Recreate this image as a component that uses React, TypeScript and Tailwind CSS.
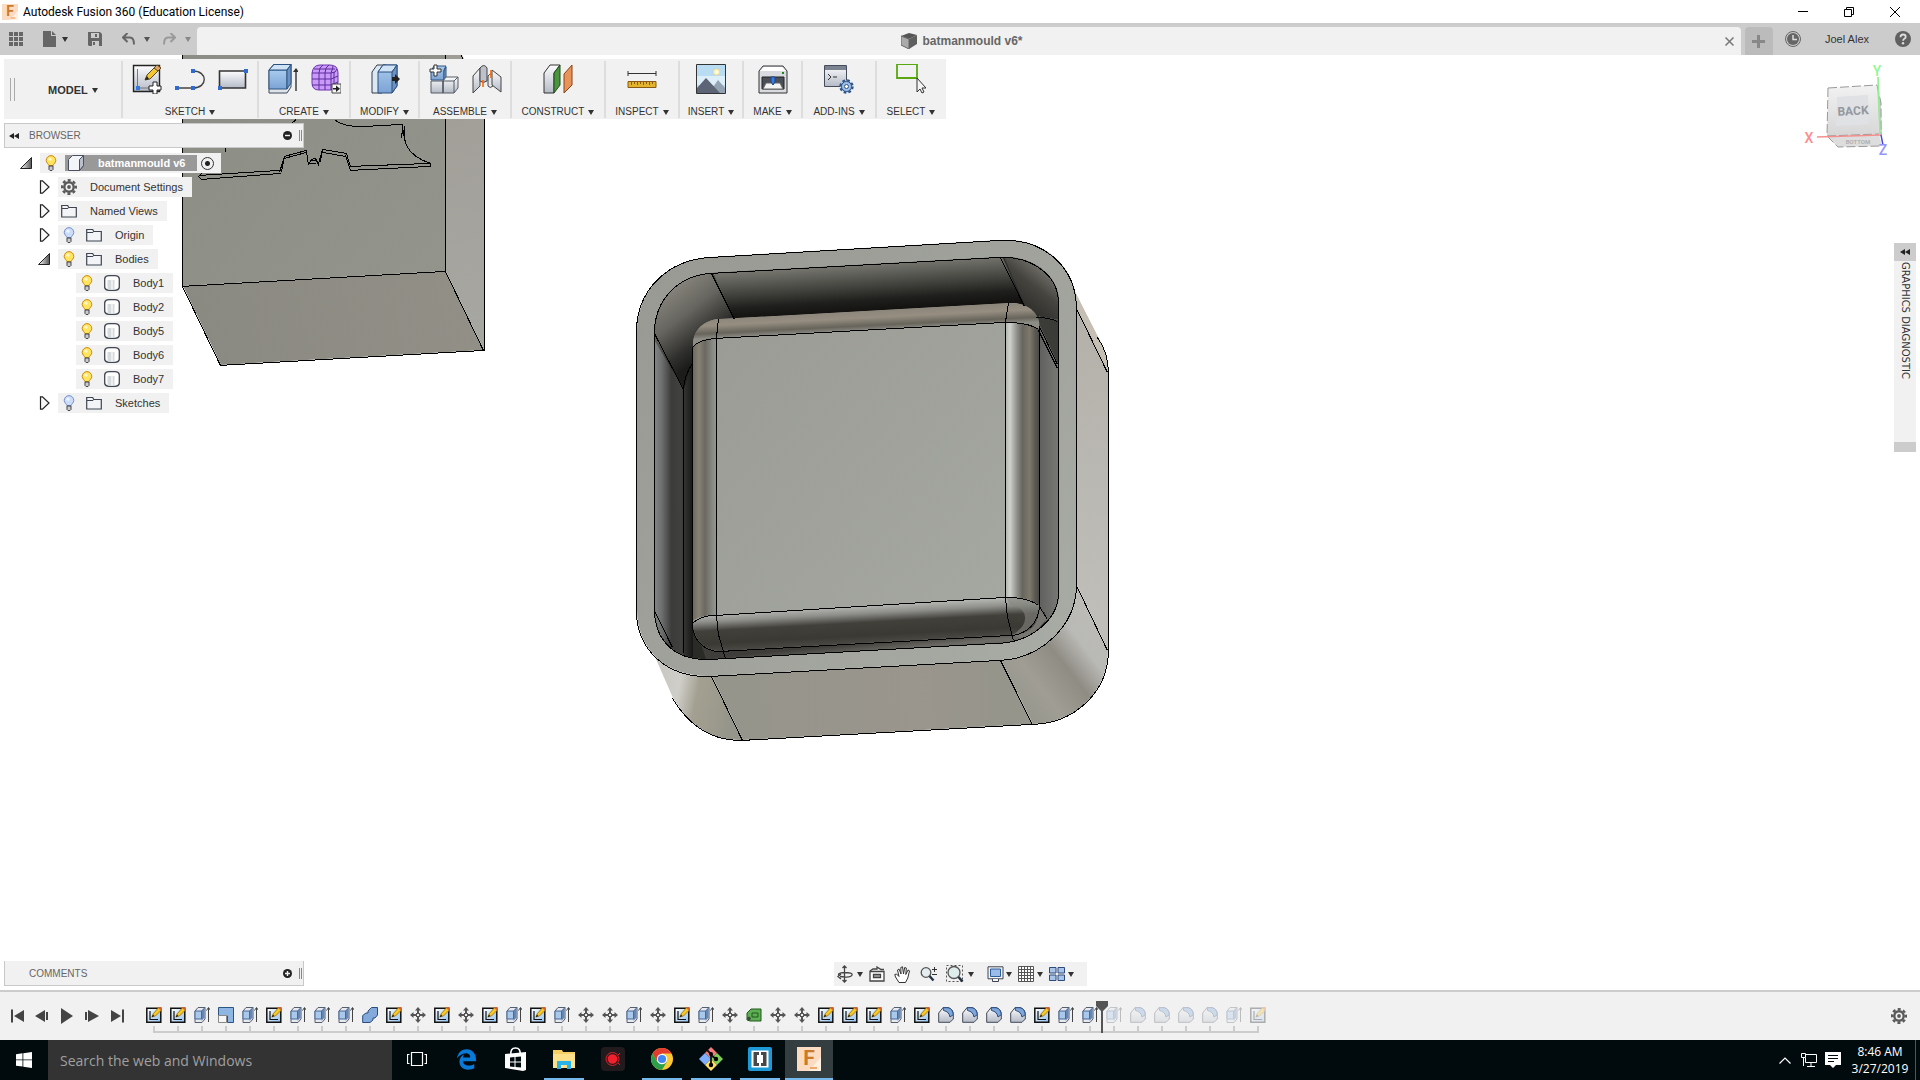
import type { ReactNode } from 'react'
import { FaEdgeLegacy } from 'react-icons/fa6'
import clsx from 'clsx'

const tools = [
  { label: 'SKETCH', width: 'w-[136px]', icons: [<SketchIcon />, <ArcIcon />, <RectIcon />] },
  { label: 'CREATE', width: 'w-[92px]', icons: [<ExtrudeIcon />, <FormIcon />] },
  { label: 'MODIFY', width: 'w-[69px]', icons: [<PressPullIcon />] },
  { label: 'ASSEMBLE', width: 'w-[92px]', icons: [<ComponentIcon />, <JointIcon />] },
  { label: 'CONSTRUCT', width: 'w-[94px]', icons: [<PlaneIcon />] },
  { label: 'INSPECT', width: 'w-[74px]', icons: [<MeasureIcon />] },
  { label: 'INSERT', width: 'w-[64px]', icons: [<DecalIcon />] },
  { label: 'MAKE', width: 'w-[59px]', icons: [<PrintIcon />] },
  { label: 'ADD-INS', width: 'w-[74px]', icons: [<ScriptIcon />] },
  { label: 'SELECT', width: 'w-[70px]', icons: [<SelectIcon />] },
]

type Feature = 'sketch' | 'extrude' | 'scale' | 'combine' | 'move' | 'canvas' | 'fillet'

const timeline: Feature[] = [
  'sketch', 'sketch', 'extrude', 'scale', 'extrude', 'sketch', 'extrude', 'extrude', 'extrude', 'combine',
  'sketch', 'move', 'sketch', 'move', 'sketch', 'extrude', 'sketch', 'extrude', 'move', 'move',
  'extrude', 'move', 'sketch', 'extrude', 'move', 'canvas', 'move', 'move', 'sketch', 'sketch',
  'sketch', 'extrude', 'sketch', 'fillet', 'fillet', 'fillet', 'fillet', 'sketch', 'extrude', 'extrude',
  'extrude', 'fillet', 'fillet', 'fillet', 'fillet', 'extrude', 'sketch',
]
const markerAt = 40

export default function App() {
  return (
    <div className="flex min-h-screen flex-col bg-white font-['Liberation_Sans',sans-serif] text-[11px] text-[#333]">
      <Gradients />
      <TitleBar />
      <TabBar />
      <main className="relative flex flex-1 flex-col">
        <Canvas />
        <div className="relative flex flex-1 items-start justify-between px-1 pt-1">
          <div>
            <Toolbar />
            <Browser />
          </div>
          <div className="flex flex-col items-end">
            <ViewCube />
            <Diagnostic />
          </div>
        </div>
        <div className="relative grid grid-cols-[1fr_auto_1fr] items-end px-1 pb-1">
          <section className="flex h-[25px] w-[300px] items-center border-x border-b border-[#c8c8c8] bg-[#f1f1f1] pl-6 text-[10px] text-[#666]">
            COMMENTS
            <button type="button" aria-label="Add comment" className="mr-[7px] ml-auto">
              <svg width="9" height="9" viewBox="0 0 9 9" className="block">
                <circle cx="4.5" cy="4.5" r="4.5" fill="#222" />
                <path d="M2 4.500h5M4.500 2v5" stroke="#f1f1f1" strokeWidth="1.400" />
              </svg>
            </button>
            <Grip />
          </section>
          <NavBar />
        </div>
      </main>
      <Timeline />
      <Taskbar />
    </div>
  )
}

function Caret({ className = 'text-[#333]' }: { className?: string }) {
  return (
    <svg width="6" height="5" viewBox="0 0 6 5" className={clsx('shrink-0', className)} aria-hidden>
      <path d="M0 0h6L3 5z" fill="currentColor" />
    </svg>
  )
}

function Grip() {
  return (
    <span className="mr-px flex h-[11px] w-[3px] justify-between" aria-hidden>
      <span className="w-px bg-[#888]" />
      <span className="w-px bg-[#888]" />
    </span>
  )
}

function TitleBar() {
  return (
    <header className="flex h-[23px] items-center pl-[2px] text-black">
      <FusionLogo size={16} />
      <h1 className="ml-[5px] font-['Roboto',sans-serif] text-[12px] leading-4">
        Autodesk Fusion 360 (Education License)
      </h1>
      <div className="mr-5 ml-auto flex items-center gap-9">
        <button type="button" aria-label="Minimize">
          <svg width="10" height="10" viewBox="0 0 10 10"><path d="M0 4.500h10" stroke="#000" /></svg>
        </button>
        <button type="button" aria-label="Restore">
          <svg width="10" height="10" viewBox="0 0 10 10" fill="none" stroke="#000">
            <path d="M.5 2.500h7v7h-7zM2.500 2.500v-2h7v7h-2" />
          </svg>
        </button>
        <button type="button" aria-label="Close">
          <svg width="10" height="10" viewBox="0 0 10 10"><path d="M0 0l10 10M10 0L0 10" stroke="#000" /></svg>
        </button>
      </div>
    </header>
  )
}

function TabBar() {
  return (
    <div className="flex h-8 bg-[#ccc]">
      <div className="flex w-[197px] items-center pl-[9px] text-[#666]">
        <button type="button" aria-label="Data panel">
          <svg width="14" height="14" viewBox="0 0 14 14" fill="currentColor">
            <path d="M0 0h4v4H0zM5 0h4v4H5zM10 0h4v4h-4zM0 5h4v4H0zM5 5h4v4H5zM10 5h4v4h-4zM0 10h4v4H0zM5 10h4v4H5zM10 10h4v4h-4z" />
          </svg>
        </button>
        <button type="button" aria-label="File" className="ml-5 flex items-center gap-[6px]">
          <svg width="13" height="16" viewBox="0 0 13 16" fill="currentColor">
            <path d="M0 0h8v5h5v11H0zM9 0l4 4H9z" />
          </svg>
          <Caret />
        </button>
        <button type="button" aria-label="Save" className="ml-5">
          <svg width="14" height="14" viewBox="0 0 14 14">
            <path d="M0 0h12l2 2v12H1l-1-1z" fill="#666" />
            <path d="M3 1h8v5H3zM4 9h7v5H4z" fill="#ccc" />
            <path d="M7 2h2v3H7zM5 10h2v3H5z" fill="#666" />
          </svg>
        </button>
        <button type="button" aria-label="Undo" className="ml-5 flex items-center gap-[9px]">
          <svg width="13" height="12" viewBox="0 0 13 12" fill="none" stroke="currentColor" strokeWidth="2">
            <path d="M5.500 0L1 4.500 5.500 9M1.500 4.500H8q4 0 4 7" />
          </svg>
          <Caret className="text-[#555]" />
        </button>
        <button type="button" aria-label="Redo" className="ml-[13px] flex items-center gap-[9px] text-[#999]">
          <svg width="13" height="12" viewBox="0 0 13 12" fill="none" stroke="currentColor" strokeWidth="2">
            <path d="M7.500 0L12 4.500 7.500 9M11.500 4.500H5q-4 0-4 7" />
          </svg>
          <Caret className="text-[#888]" />
        </button>
      </div>
      <div className="mt-1 flex flex-1 items-center rounded-t bg-[#f1f1f1]">
        <div className="flex flex-1 items-center justify-center gap-[5px] pl-[2px] text-[12px] font-bold text-[#666]">
          <svg width="16" height="16" viewBox="0 0 16 16">
            <path d="M0 3l8-3 8 2-8 4z" fill="#555" />
            <path d="M0 3l8 3v10l-8-4z" fill="#aaa" stroke="#666" />
            <path d="M8 6l8-4v9l-8 5z" fill="#5f5f5f" />
          </svg>
          batmanmould v6*
        </div>
        <button type="button" aria-label="Close tab" className="mr-[7px]">
          <svg width="9" height="9" viewBox="0 0 9 9"><path d="M.5.5l8 8M8.500.5l-8 8" stroke="#777" strokeWidth="1.500" /></svg>
        </button>
      </div>
      <button type="button" aria-label="New tab" className="mt-1 ml-1 flex w-7 items-center justify-center rounded-t bg-[#bbb]">
        <svg width="13" height="13" viewBox="0 0 13 13"><path d="M0 6.500h13M6.500 0v13" stroke="#888" strokeWidth="3" /></svg>
      </button>
      <div className="flex items-center pr-[9px] pl-3">
        <button type="button" aria-label="Job status">
          <svg width="16" height="16" viewBox="0 0 16 16">
            <circle cx="8" cy="8" r="7.500" fill="none" stroke="#666" />
            <circle cx="8" cy="8" r="6" fill="#666" />
            <path d="M8 4v4.500h4" fill="none" stroke="#ddd" strokeWidth="1.500" />
          </svg>
        </button>
        <button type="button" className="mr-[26px] ml-6 leading-4">Joel Alex</button>
        <button type="button" aria-label="Help">
          <svg width="16" height="16" viewBox="0 0 16 16">
            <circle cx="8" cy="8" r="8" fill="#606060" />
            <path d="M5.500 6.200q0-2.700 2.600-2.700t2.600 2.200q0 1.300-1.400 2.100-1.200.7-1.200 2" fill="none" stroke="#ddd" strokeWidth="1.800" />
            <circle cx="8" cy="12.200" r="1.200" fill="#ddd" />
          </svg>
        </button>
      </div>
    </div>
  )
}

function Toolbar() {
  return (
    <nav className="flex h-[60px] w-max bg-[#f1f1f1] pt-[2px] pr-px pb-px text-[10px] text-[#333]">
      <div className="flex w-[117px] items-center">
        <span className="ml-[6px] flex h-[23px] w-[5px] justify-between" aria-hidden>
          <span className="w-px bg-[#aaa]" />
          <span className="w-px bg-[#aaa]" />
        </span>
        <button type="button" className="mt-px ml-[33px] flex items-center gap-1 text-[11px] font-bold">
          MODEL <Caret />
        </button>
      </div>
      {tools.map((tool) => (
        <div
          key={tool.label}
          className={clsx('flex flex-col items-center justify-between border-l-2 border-[#ddd] pt-[3px]', tool.width)}
        >
          <div className="flex gap-[13px]">
            {tool.icons.map((icon, i) => (
              <button key={i} type="button" aria-label={tool.label + ' command'}>{icon}</button>
            ))}
          </div>
          <button type="button" className="flex items-center gap-1 leading-3">
            {tool.label} <Caret />
          </button>
        </div>
      ))}
    </nav>
  )
}

function Icon({ children }: { children: ReactNode }) {
  return (
    <svg width="30" height="30" viewBox="0 0 30 30" fill="none" className="block" aria-hidden>
      {children}
    </svg>
  )
}

function SketchIcon() {
  return (
    <Icon>
      <path d="M1.500 1.500h26v26h-26z" fill="url(#steel)" stroke="#222" strokeWidth="1.400" />
      <path d="M5.500 5v19H17" stroke="#777" />
      <path d="M4 22h4v4H4z" fill="#2f7be0" />
      <path d="M13 16l2-5L24 2l4 3-10 10z" fill="#f4c733" stroke="#5a4a20" />
      <path d="M22 4l3-3 4 3-3 3z" fill="#e3a56c" stroke="#5a4a20" />
      <path d="M13 16l2-4 2 3z" fill="#222" />
      <path d="M21 18h4v4h4v4h-4v4h-4v-4h-4v-4h4z" fill="#fff" stroke="#222" />
    </Icon>
  )
}

function ArcIcon() {
  return (
    <Icon>
      <path d="M2 24h16c15 0 15-17 0-17" stroke="#444" strokeWidth="1.400" />
      <path d="M0 22h4v4H0zM16 22h4v4h-4zM16 5h4v4h-4z" fill="#2f6bd0" />
    </Icon>
  )
}

function RectIcon() {
  return (
    <Icon>
      <path d="M1.500 7h26v17h-26z" fill="url(#steel)" stroke="#333" strokeWidth="1.600" />
      <path d="M0 22h4v4H0zM26 5h4v4h-4z" fill="#2f6bd0" />
    </Icon>
  )
}

function ExtrudeIcon() {
  return (
    <Icon>
      <path d="M1 6l5-6h17v23l-4 6H1z" fill="#dfe3ea" stroke="#3d4a5e" />
      <path d="M1 6h18v19H1z" fill="url(#blue)" stroke="#2c5482" />
      <path d="M1 6l5-5.500h17L19 6z" fill="#cfe3f5" stroke="#2c5482" />
      <path d="M19 6l4-5.500V19l-4 6z" fill="#6c92c2" stroke="#2c5482" />
      <path d="M28 5v22" stroke="#333" strokeWidth="1.400" />
      <path d="M25 8l3-4 3 4z" fill="#333" />
    </Icon>
  )
}

function FormIcon() {
  return (
    <Icon>
      <path d="M1 9q1-8 8-8h10q8 0 8 8v9q0 8-8 8H8q-7 0-7-7z" fill="#c99af8" stroke="#6d35b0" />
      <path d="M1 9h19q5 0 6-4M1 15h19l7-3M1 21h19l7-3M8 9v17M14 9v17M20 9v17M8 9q0-6 4-8M14 9q0-6 4-8M20 9q2-5 2-7M23 8v16M3 5h21" stroke="#5e2a9e" />
      <path d="M21 20h9v9h-9z" fill="#f5f5f5" stroke="#444" />
      <path d="M22 24h3v-2.500l4 3.200-4 3.300v-2.500h-3z" fill="#222" />
    </Icon>
  )
}

function PressPullIcon() {
  return (
    <Icon>
      <path d="M2 8l5-7h9l-4 7v21H2z" fill="#dce8f4" stroke="#333c48" />
      <path d="M8 8l5-7h14v21l-5 7H8z" fill="url(#blue)" stroke="#2c4f7c" />
      <path d="M8 8l5-7h14l-5 7z" fill="#cfe3f5" stroke="#2c4f7c" />
      <path d="M22 8l5-7v21l-5 7z" fill="#6c92c2" stroke="#2c4f7c" />
      <path d="M22 13h3v-3l5 5-5 5v-3h-3z" fill="#222" />
    </Icon>
  )
}

function ComponentIcon() {
  return (
    <Icon>
      <path d="M2 7l3-5h12l-2 4v10H2z" fill="url(#blue)" stroke="#2c5482" />
      <path d="M15 7l2-4v10l-2 4z" fill="#7da3cf" stroke="#2c5482" />
      <path d="M2 17h12v12H2zM14 17l3-4h12v11l-4 5H14z" fill="url(#steel)" stroke="#555c66" />
      <path d="M14 17h11l4-4M25 17v12M14 17v12" stroke="#555c66" />
      <path d="M5 1h3v4h4v3H8v4H5V8H1V5h4z" fill="#fff" stroke="#333" />
    </Icon>
  )
}

function JointIcon() {
  return (
    <Icon>
      <path d="M1 12l7-8v18l-7 7z" fill="url(#steel)" stroke="#444" />
      <path d="M8 4q4-5 7 0v13q-4 3-7 0z" fill="#bcc1ca" stroke="#444" />
      <path d="M16 12q3-4 5 0v10q-3 3-5 0z" fill="#e2e5ea" stroke="#444" />
      <path d="M20 6l9 7v15l-9-7z" fill="url(#steel)" stroke="#444" />
      <path d="M11 16v7M19 6v8" stroke="#f60" strokeWidth="1.600" />
    </Icon>
  )
}

function PlaneIcon() {
  return (
    <Icon>
      <path d="M1 9l6-8h10l-6 8v20H1z" fill="url(#steel)" stroke="#333" />
      <path d="M11 9l6-8v20l-6 8z" fill="#4d9440" stroke="#1f4a18" />
      <path d="M21 10l8-9v20l-8 8z" fill="#e8935a" stroke="#8a4215" />
    </Icon>
  )
}

function MeasureIcon() {
  return (
    <Icon>
      <path d="M1 9.500h28M1 7v5M29 7v5" stroke="#333" />
      <path d="M1 17.500h28v6H1z" fill="#e3b52c" stroke="#8a5a10" />
      <path d="M4.500 18v3M7.500 18v2M10.500 18v3M13.500 18v2M16.500 18v3M19.500 18v2M22.500 18v3M25.500 18v2" stroke="#8a5a10" />
    </Icon>
  )
}

function DecalIcon() {
  return (
    <Icon>
      <path d="M.5.500h29v29H.500z" fill="#b9dcf2" stroke="#333" />
      <path d="M1 12h28v9H1z" fill="#dceef8" />
      <circle cx="20.500" cy="8" r="3" fill="#fffbd8" stroke="#f0d890" />
      <path d="M13 29l9-13 7 8v5z" fill="#93a3b3" />
      <path d="M1 24l9-10 14 15H1z" fill="#5d6476" />
    </Icon>
  )
}

function PrintIcon() {
  return (
    <Icon>
      <path d="M1 7l4-5h20l4 5v22H1z" fill="#d9dbe0" stroke="#333" />
      <path d="M2 7l4-4h18l4 4z" fill="#fff" />
      <path d="M4 13h22v12H4z" fill="#4a4f58" stroke="#222" />
      <path d="M8 19h14l3 6H5z" fill="#f4f4f4" stroke="#666" />
      <path d="M13 13h4v5l-2 3-2-3z" fill="#3a7be0" stroke="#1c448c" />
      <path d="M24 8h2v2h-2z" fill="#178a17" />
    </Icon>
  )
}

function ScriptIcon() {
  return (
    <Icon>
      <path d="M.5 1.500h22v21H.5z" fill="url(#steel)" stroke="#444c5c" />
      <path d="M1 2h21v4H1z" fill="#7b8290" />
      <path d="M4 10l3 3-3 3M9 13h4" stroke="#333" />
      <circle cx="22.500" cy="22.500" r="6" fill="#9fbfe6" stroke="#2f5488" strokeWidth="2.400" strokeDasharray="2.600 2.100" />
      <circle cx="22.500" cy="22.500" r="5" fill="#9fbfe6" stroke="#2f5488" />
      <circle cx="22.500" cy="22.500" r="2" fill="#fff" stroke="#2f5488" />
    </Icon>
  )
}

function SelectIcon() {
  return (
    <Icon>
      <path d="M1 0h20v14H1z" stroke="#59a80f" strokeWidth="1.800" />
      <path d="M21 14v14l3-3 2 4 2-1-2-4h4z" fill="#f4f4f4" stroke="#333" />
    </Icon>
  )
}

function Browser() {
  return (
    <section className="mt-1">
      <div className="flex h-[25px] w-[300px] items-center border border-[#c8c8c8] bg-[#f1f1f1] pl-1 text-[10px] text-[#666]">
        <Rewind />
        <h2 className="ml-[10px]">BROWSER</h2>
        <button type="button" aria-label="Collapse all" className="mr-[7px] ml-auto">
          <svg width="9" height="9" viewBox="0 0 9 9" className="block">
            <circle cx="4.500" cy="4.500" r="4.500" fill="#222" />
            <path d="M2 4.500h5" stroke="#f1f1f1" strokeWidth="1.400" />
          </svg>
        </button>
        <Grip />
      </div>
      <ul className="mt-[5px] flex flex-col gap-1">
        <li className="flex h-5 items-center pl-4">
          <Expander open />
          <div className="flex h-5 items-center bg-[#f1f1f1] pr-[7px] pl-[3px]">
            <Bulb on />
            <span className="ml-[6px] flex h-4 items-center bg-[#999] pr-3 pl-[3px] font-bold text-white">
              <svg width="16" height="16" viewBox="0 0 16 16">
                <path d="M.5 4.500l4-4h11v10l-4 5H.500z" fill="#f2f4f8" stroke="#4a515e" />
                <path d="M11.500 4.500l4-4v10l-4 5z" fill="#b9bfcb" stroke="#4a515e" />
              </svg>
              <span className="ml-[14px] leading-4">batmanmould v6</span>
            </span>
            <input
              type="radio"
              aria-label="Activate component"
              defaultChecked
              className="ml-1 size-[13px] appearance-none rounded-full border border-[#333] bg-[radial-gradient(circle,#222_2px,transparent_3px)]"
            />
          </div>
        </li>
        <Node label="Document Settings" icon={<Gear size={16} />} />
        <Node label="Named Views" icon={<Folder />} />
        <Node label="Origin" icon={<Folder />} bulb="off" />
        <Node label="Bodies" icon={<Folder />} bulb="on" open />
        {['Body1', 'Body2', 'Body5', 'Body6', 'Body7'].map((body) => (
          <li key={body} className="flex h-5 items-center pl-[72px]">
            <Chip label={body} icon={<Solid />} bulb="on" />
          </li>
        ))}
        <Node label="Sketches" icon={<Folder />} bulb="off" />
      </ul>
    </section>
  )
}

type NodeProps = { label: string; icon: ReactNode; bulb?: 'on' | 'off'; open?: boolean }

function Node({ open = false, ...chip }: NodeProps) {
  return (
    <li className="flex h-5 items-center pl-[34px]">
      <Expander open={open} />
      <Chip {...chip} />
    </li>
  )
}

function Chip({ label, icon, bulb }: NodeProps) {
  return (
    <div className="flex h-5 items-center gap-[9px] bg-[#f1f1f1] pr-[9px] pl-[3px]">
      {bulb && <Bulb on={bulb === 'on'} />}
      {icon}
      <span className="ml-1 leading-4">{label}</span>
    </div>
  )
}

function Expander({ open = false }: { open?: boolean }) {
  return (
    <button type="button" aria-label={open ? 'Collapse' : 'Expand'} className="w-5">
      <svg width="14" height="14" viewBox="0 0 14 14" className="block">
        {open ? (
          <path d="M11.500 1.500v11H.5z" fill="url(#fold)" stroke="#222" />
        ) : (
          <path d="M2.500.8v12.400l2 0 6.500-6.200-6.500-6.200z" fill="#f8f8f8" stroke="#222" strokeWidth="1.200" />
        )}
      </svg>
    </button>
  )
}

function Bulb({ on = false }: { on?: boolean }) {
  return (
    <svg width="16" height="16" viewBox="0 0 16 16" className="shrink-0" aria-hidden>
      <path
        d="M8 .6a4.800 4.800 0 0 0-4.800 4.800c0 2.400 2.300 3.300 2.600 5.100h4.400c.3-1.800 2.600-2.700 2.600-5.100A4.800 4.800 0 0 0 8 .6z"
        fill={on ? '#ffe45c' : '#ccdcf8'}
        stroke={on ? '#c98a1c' : '#7590c8'}
      />
      <circle cx="7" cy="4.200" r="1.600" fill="#fff" opacity=".7" />
      <path d="M6 11h4v3.500l-1 1H7l-1-1z" fill="#c8ccd2" stroke="#444" />
    </svg>
  )
}

function Folder() {
  return (
    <svg width="16" height="14" viewBox="0 0 16 14" className="shrink-0" aria-hidden>
      <path d="M.7 13v-11.500h6l1 2h7.600v9.500z" fill="#f2f4f7" stroke="#3f4652" strokeWidth="1.200" />
      <path d="M1 4.500h6l1-1" fill="none" stroke="#3f4652" />
    </svg>
  )
}

function Solid() {
  return (
    <svg width="16" height="16" viewBox="0 0 16 16" className="shrink-0" aria-hidden>
      <path d="M.7 3.500Q1.500.7 5 .7h6q3.500 0 4.300 2.800v9Q14.500 15.300 11 15.300H5Q1.500 15.300.7 12.500z" fill="#fff" stroke="#3f4652" strokeWidth="1.300" />
      <path d="M3.500 5h7v9.500h-6l-1-1z" fill="#d6dade" />
      <path d="M7 5h2v9.500H7z" fill="#eceef0" />
    </svg>
  )
}

function Gear({ size }: { size: number }) {
  return (
    <svg width={size} height={size} viewBox="0 0 16 16" className="shrink-0" aria-hidden>
      <circle cx="8" cy="8" r="6.800" fill="none" stroke="#5a5a5a" strokeWidth="2.400" strokeDasharray="3 2.340" strokeDashoffset="1.500" />
      <circle cx="8" cy="8" r="4.700" fill="none" stroke="#5a5a5a" strokeWidth="2.400" />
      <circle cx="8" cy="8" r="1.900" fill="#5a5a5a" />
    </svg>
  )
}

function Rewind() {
  return (
    <svg width="10" height="6" viewBox="0 0 10 6" className="shrink-0" aria-hidden>
      <path d="M5 0v6L0 3zM10 0v6L5 3z" fill="#222" />
    </svg>
  )
}

function ViewCube() {
  return (
    <svg width="116" height="100" viewBox="1800 59 116 100" className="block">
      <path d="M1828 88l49-3 2 49-52 2z" fill="url(#cube)" />
      <path d="M1877 85l4 18 1 32-3-1z" fill="#cfcfcf" />
      <path d="M1827 136l52-2 3 12-44 1z" fill="#ddd" />
      <path d="M1837 97l31-2 1 29-33 2z" fill="#dfe1e4" />
      <path d="M1828 88l49-3M1828 88l-1 48M1877 85l4 18v32M1827 136l11 11 44-1M1827 136l52-2" fill="none" stroke="#999" strokeDasharray="9 3" />
      <path d="M1878 77l2 57" stroke="#8fef8f" strokeWidth="1.600" />
      <path d="M1817 137l64-2" stroke="#f58f8f" strokeWidth="1.600" />
      <path d="M1881 135l2 10" stroke="#4444e0" strokeWidth="1.400" />
      <g fontFamily="Roboto, sans-serif" textAnchor="middle">
        <text x="1853" y="115" fontSize="12" fontWeight="700" fill="#94989e" transform="rotate(-3 1853 110)">BACK</text>
        <text x="1858" y="144" fontSize="6" fontWeight="500" fill="#aaa">BOTTOM</text>
        <text x="1877" y="76" fontSize="14" fontWeight="500" fill="#90f890">Y</text>
        <text x="1809" y="143" fontSize="14" fontWeight="500" fill="#ff8c8c">X</text>
        <text x="1883" y="155" fontSize="14" fontWeight="500" fill="#9494ff">Z</text>
      </g>
    </svg>
  )
}

function Diagnostic() {
  return (
    <aside className="mt-[84px] flex w-[22px] flex-col items-center bg-[#f1f1f1]">
      <button type="button" aria-label="Expand panel" className="flex h-[18px] w-full items-center justify-center bg-[#ccc]">
        <Rewind />
      </button>
      <span className="h-[181px] pt-px font-['DejaVu_Sans',sans-serif] text-[10px] leading-5 [writing-mode:vertical-rl]">
        GRAPHICS DIAGNOSTIC
      </span>
      <span className="h-[10px] w-full bg-[#ccc]" />
    </aside>
  )
}

function NavBar() {
  return (
    <div className="flex h-6 w-[253px] items-center bg-[#f1f1f1] pl-[2px]">
      <button type="button" aria-label="Orbit" className="flex items-center gap-[3px]">
        <svg width="18" height="18" viewBox="0 0 18 18" fill="none" stroke="#444" strokeWidth="1.300">
          <path d="M8.500 1v16M6.500 3l2-2 2 2M6.500 15l2 2 2-2M3 10.500Q1 8 8 7.500q9 0 8 2.500t-7 2l-5-.500M5 9l-3 2.500L5 14" />
        </svg>
        <Caret />
      </button>
      <button type="button" aria-label="Look at" className="ml-[6px]">
        <svg width="16" height="16" viewBox="0 0 16 16" fill="#fff" stroke="#444" strokeWidth="1.300">
          <path d="M1 5.500h14v9.500H1z" />
          <path d="M1 5l3-2 4 0 0-2 4 2.500H15" fill="none" />
          <path d="M4.500 8.500h7v3h-7z" fill="#aaa" />
        </svg>
      </button>
      <button type="button" aria-label="Pan" className="ml-[9px]">
        <svg width="17" height="17" viewBox="0 0 17 17" fill="#fff" stroke="#333">
          <path d="M5 16.500L1.500 11 .800 8.500l1.700-.500L5 10.500 3.500 4l1.500-1 2 5L6.800 1.500 8.500.800 9.500 8l1.200-6.500 1.600.5L11.800 8.500 14 4l1.500.8-1.700 7.200-2.300 4.500z" />
        </svg>
      </button>
      <button type="button" aria-label="Zoom" className="ml-[9px]">
        <svg width="17" height="16" viewBox="0 0 17 16" fill="none" stroke="#555">
          <circle cx="6" cy="6.500" r="4.800" fill="#e4eef0" strokeWidth="1.300" />
          <path d="M9.500 10l4 4.500" stroke="#234" strokeWidth="2.400" />
          <path d="M12 3.500h5M14.500 1v5M12 8.500h5" stroke="#333" />
        </svg>
      </button>
      <button type="button" aria-label="Fit" className="ml-[9px] flex items-center gap-1">
        <svg width="18" height="18" viewBox="0 0 18 18" fill="none" stroke="#555">
          <path d="M.5.500h16v16H.500z" strokeDasharray="2 2" />
          <circle cx="8" cy="7.500" r="6" fill="#dfecec" strokeWidth="1.300" />
          <path d="M12.500 12l4 4.500" stroke="#234" strokeWidth="2.600" />
        </svg>
        <Caret />
      </button>
      <button type="button" aria-label="Display settings" className="ml-[13px] flex items-center gap-[2px]">
        <svg width="17" height="16" viewBox="0 0 17 16" fill="#f4f4f4" stroke="#3c4450">
          <path d="M1 .800h15v12H1z" />
          <path d="M3.500 3h10v7.500h-10z" fill="#9bbce6" stroke="#2b5ca0" />
          <path d="M5.500 13v2.500h6V13" />
        </svg>
        <Caret />
      </button>
      <button type="button" aria-label="Grid" className="ml-[6px] flex items-center gap-[3px]">
        <svg width="16" height="16" viewBox="0 0 16 16" fill="#fff" stroke="#555">
          <path d="M.5.500h15v15H.500zM3.500 0v16M6.500 0v16M9.500 0v16M12.500 0v16M0 3.500h16M0 6.500h16M0 9.500h16M0 12.500h16" />
        </svg>
        <Caret />
      </button>
      <button type="button" aria-label="Viewports" className="ml-[6px] flex items-center gap-[3px]">
        <svg width="16" height="14" viewBox="0 0 16 14" fill="#a9c4ea" stroke="#2e4a78">
          <path d="M.500.500h6.500v5.500H.500zM9 .500h6.500v5.500H9zM.500 8h6.500v5.500H.500zM9 8h6.500v5.500H9z" />
        </svg>
        <Caret />
      </button>
    </div>
  )
}

function FeatureIcon({ kind }: { kind: Feature }) {
  return (
    <svg width="16" height="16" viewBox="0 0 16 16" fill="none" className="block" aria-hidden>
      {kind === 'sketch' && (
        <>
          <path d="M.800 1.300h14v14h-14z" fill="url(#page)" stroke="#111" strokeWidth="1.500" />
          <path d="M4 4v8.500h8" stroke="#111" strokeWidth="1.200" />
          <path d="M6 10l1-3 6-7 3 2.500-6.500 6.500z" fill="#f8c820" stroke="#8a6010" strokeWidth=".7" />
          <path d="M12 1l2-1.500 2.500 2L15 3.500z" fill="#d4603a" />
          <path d="M5.500 10.500L7 7.500 8.500 9z" fill="#222" />
        </>
      )}
      {kind === 'extrude' && (
        <>
          <path d="M1 4l3-3.500h7V12l-3 3.500H1z" fill="#e8eaee" stroke="#555f6e" />
          <path d="M1 4h6v8H1z" fill="#a9c8ea" />
          <path d="M7.500 4l3-3v9.500l-3 3.500z" fill="#6487b8" />
          <path d="M1 4h6.500v8H1zM7.500 4L11 .500" stroke="#47699c" />
          <path d="M14.500 1v14M12.500 3.500l2-3 2 3" stroke="#444" />
        </>
      )}
      {kind === 'scale' && (
        <>
          <path d="M.500.500h15v15h-6V9h-9z" fill="#8fb5e2" stroke="#2c5482" />
          <path d="M.500 8.500h8v7h-8z" fill="#f6f6f6" stroke="#888" />
        </>
      )}
      {kind === 'combine' && (
        <path d="M.700 8.500L4 6h2V4l3.500-3.500h6V8L13 11h-2v2l-3 2.500H.700z" fill="#84aadb" stroke="#2b4c80" />
      )}
      {kind === 'move' && (
        <>
          <path d="M8 0l3 3.500H9V6H7V3.500H5zM8 16l3-3.500H9V10H7v2.500H5zM0 8l3.500-3v2H6v2H3.500v2zM16 8l-3.500-3v2H10v2h2.500v2z" fill="#555" />
          <rect x="6.500" y="6.500" width="3" height="3" fill="#f1f1f1" stroke="#555" />
        </>
      )}
      {kind === 'canvas' && (
        <>
          <path d="M1 13V6l4-4h10v12H4z" fill="#5fae55" stroke="#1f5a1a" />
          <path d="M6 6h6M6 6v4h6V6" stroke="#1f5a1a" />
          <circle cx="3" cy="11.500" r="1.800" fill="#3b4a3a" />
        </>
      )}
      {kind === 'fillet' && (
        <>
          <path d="M.700 15.300V6L5 .700h5q5 1 5.300 7V12L12 15.300z" fill="url(#steel)" stroke="#414a58" />
          <path d="M5 .700h5q5 1 5.300 7L12 10Q11 4.500 5.500 3.500z" fill="#7ea6d8" stroke="#2b4c80" />
        </>
      )}
    </svg>
  )
}

function Timeline() {
  return (
    <section className="flex h-[50px] items-center border-t-2 border-[#ccc] bg-[#f1f1f1] px-[10px]">
      <div className="flex items-center gap-[10px] text-[#444]">
        <Play label="Go to start"><path d="M1 1.500h2v13H1zM14 2v12L4 8z" /></Play>
        <Play label="Step back"><path d="M10 2v12L0 8zM11 4h2v8h-2z" /></Play>
        <Play label="Play"><path d="M1 0v16l12-8z" /></Play>
        <Play label="Step forward"><path d="M3 2v12l11-6zM0 4h2v8H0z" /></Play>
        <Play label="Go to end"><path d="M12 1.500h2v13h-2zM1 2v12l10-6z" /></Play>
      </div>
      <ol className="mt-2 ml-[17px] flex">
        {timeline.map((kind, i) => (
          <li key={i} className="relative flex w-6 flex-col items-center">
            <span className={clsx(i >= markerAt && 'opacity-30')}>
              <FeatureIcon kind={kind} />
            </span>
            <span className="mt-[3px] h-[5px] w-[2px] bg-[#ccc]" />
            <span
              className={clsx(
                'h-[2px] bg-[#ccc]',
                i === 0 || i === timeline.length - 1 ? 'w-[13px]' : 'w-full',
                i === 0 && 'self-end',
                i === timeline.length - 1 && 'self-start',
              )}
            />
            {i === markerAt && (
              <svg width="12" height="32" viewBox="0 0 12 32" className="absolute -top-[6px] -left-[6px]">
                <path d="M0 0h12v5L7 10v22H5V10L0 5z" fill="#555" />
              </svg>
            )}
          </li>
        ))}
      </ol>
      <button type="button" aria-label="Timeline settings" className="mr-[3px] ml-auto">
        <Gear size={16} />
      </button>
    </section>
  )
}

function Play({ label, children }: { label: string; children: ReactNode }) {
  return (
    <button type="button" aria-label={label}>
      <svg width="15" height="16" viewBox="0 0 15 16" fill="currentColor" className="block">{children}</svg>
    </button>
  )
}

function FusionLogo({ size }: { size: number }) {
  return (
    <svg width={size} height={size} viewBox="0 0 24 24" className="shrink-0" aria-hidden>
      <path d="M0 0h24v24H0z" fill="#fbdcc2" />
      <path d="M12 24L24 10v14z" fill="#fff0e2" />
      <text x="12" y="18" fontSize="21" fontWeight="700" fontFamily="Roboto, sans-serif" textAnchor="middle" fill="#cc7a2a">F</text>
      <path d="M13 20h7v2h-7z" fill="#f0a868" />
    </svg>
  )
}

function Taskbar() {
  return (
    <footer className="flex h-10 bg-[#010b0e] font-['Open_Sans',sans-serif] text-white">
      <button type="button" aria-label="Start" className="flex w-12 items-center justify-center">
        <svg width="16" height="16" viewBox="0 0 16 16" fill="#fff">
          <path d="M0 2.200L6.500 1.300v6.200H0zM7.300 1.200L16 0v7.500H7.300zM0 8.300h6.500v6.300L0 13.700zM7.300 8.300H16V16l-8.700-1.200z" />
        </svg>
      </button>
      <input
        type="text"
        aria-label="Search"
        placeholder="Search the web and Windows"
        className="mr-px h-10 w-[344px] bg-[#333] px-3 text-[14px] placeholder:text-[#a0a0a0]"
      />
      <div className="flex gap-px">
        <Task label="Task view">
          <svg width="20" height="16" viewBox="0 0 20 16" fill="none" stroke="#fff" strokeWidth="1.200">
            <path d="M4.500 1.500h11v13h-11zM2.500 3.500h-2v9h2M17.500 3.500h2v9h-2" />
          </svg>
        </Task>
        <Task label="Edge"><FaEdgeLegacy size={21} color="#0a7ad8" /></Task>
        <Task label="Store">
          <svg width="21" height="24" viewBox="0 0 21 24">
            <path d="M6 8Q5 1 10.500 1T15 8" fill="none" stroke="#fff" strokeWidth="1.500" />
            <path d="M0 7l21-2v18l-3 1L0 21z" fill="#fff" />
            <path d="M5 10.500l4.500-.500v4.500H5zM10.500 10l5.500-.500v5h-5.500zM5 15.500h4.500V20L5 19.500zM10.500 15.500H16v5l-5.500-.500z" fill="#010b0e" />
          </svg>
        </Task>
        <Task label="File Explorer" running>
          <svg width="22" height="19" viewBox="0 0 22 19">
            <path d="M0 0h9l1 2h12v16H0z" fill="#f5cf62" />
            <path d="M0 4h22v14H0z" fill="#fde08a" />
            <path d="M4 19v-8h14v8h-4v-4H8v4z" fill="#28b4e8" />
          </svg>
        </Task>
        <Task label="Recorder">
          <svg width="24" height="24" viewBox="0 0 24 24">
            <rect width="24" height="24" rx="4" fill="#221b1d" />
            <circle cx="11.500" cy="12" r="6.500" fill="none" stroke="#d8202c" />
            <circle cx="11.500" cy="12" r="4.800" fill="#f0202c" />
            <path d="M17 8l2-2M17 16l2 2" stroke="#d8202c" />
          </svg>
        </Task>
        <Task label="Chrome" running>
          <svg width="22" height="22" viewBox="0 0 22 22">
            <circle cx="11" cy="11" r="11" fill="#fcc934" />
            <path d="M1.500 5.500A11 11 0 0 1 20.500 5.500H11L6.200 13.800z" fill="#e33b2e" />
            <path d="M1.500 5.500A11 11 0 0 0 11 22l4.800-8.200H6.200z" fill="#2c9f4b" />
            <circle cx="11" cy="11" r="5.200" fill="#fff" />
            <circle cx="11" cy="11" r="4.100" fill="#4285f4" />
          </svg>
        </Task>
        <Task label="Git" running>
          <svg width="24" height="24" viewBox="0 0 24 24">
            <path d="M12 0l6 6-6 6-6-6z" fill="#f47c7c" />
            <path d="M6 6l6 6-6 6-6-6z" fill="#7fb0ff" />
            <path d="M18 6l6 6-6 6-6-6z" fill="#7fd05a" />
            <path d="M12 12l6 6-6 6-6-6z" fill="#ffe066" />
            <path d="M8 3l4 4v12M12 8l5 4" stroke="#111" strokeWidth="1.800" fill="none" />
            <circle cx="12" cy="7" r="2" />
            <circle cx="12" cy="18" r="2.200" />
            <circle cx="17" cy="12" r="2.200" />
          </svg>
        </Task>
        <Task label="Brackets" running>
          <svg width="24" height="24" viewBox="0 0 24 24">
            <rect width="24" height="24" rx="2" fill="#1c9ad8" />
            <path d="M3.500 3.500h17v17h-17z" fill="#fff" />
            <path d="M5.500 5h5.500v3H9v8h2v3H5.500zM18.500 5H13v3h2v8h-2v3h5.500z" fill="#484848" />
          </svg>
        </Task>
        <Task label="Fusion 360" running active><FusionLogo size={24} /></Task>
      </div>
      <div className="ml-auto flex items-center">
        <button type="button" aria-label="Show hidden icons">
          <svg width="12" height="7" viewBox="0 0 12 7"><path d="M.500 6.500L6 1l5.500 5.500" fill="none" stroke="#fff" strokeWidth="1.200" /></svg>
        </button>
        <button type="button" aria-label="Network" className="ml-[10px]">
          <svg width="16" height="14" viewBox="0 0 16 14" fill="none" stroke="#fff">
            <path d="M5 1.500h10.500v8H4.500V5M.500.500h4v4h-4zM2.500 4.500v8.500M10 10v3M6 13.500h8" />
          </svg>
        </button>
        <button type="button" aria-label="Notifications" className="ml-2">
          <svg width="16" height="16" viewBox="0 0 16 16">
            <path d="M0 0h16v13h-5l-3 3-3-3H0z" fill="#fff" />
            <path d="M3 3.500h10M3 6.500h10M3 9.500h6" stroke="#010b0e" />
          </svg>
        </button>
        <div className="ml-1 w-[70px] text-center text-[12px] leading-[17px]">
          <div>8:46 AM</div>
          <div>3/27/2019</div>
        </div>
        <span className="mr-1 h-10 w-px bg-[#555]" />
      </div>
    </footer>
  )
}

type TaskProps = { label: string; running?: boolean; active?: boolean; children: ReactNode }

function Task({ label, running, active, children }: TaskProps) {
  return (
    <button
      type="button"
      aria-label={label}
      className={clsx('flex h-10 w-12 flex-col items-center', active && 'bg-[#343e41]')}
    >
      <span className="flex flex-1 items-center">{children}</span>
      <span className={clsx('h-[2px]', active ? 'w-full' : 'w-10', running && 'bg-[#76b9ed]')} />
    </button>
  )
}

function Gradients() {
  return (
    <svg width="0" height="0" className="absolute" aria-hidden>
      <defs>
        <linearGradient id="steel" x2="0" y2="1">
          <stop stopColor="#fdfdfe" />
          <stop offset="1" stopColor="#b4bac6" />
        </linearGradient>
        <linearGradient id="blue" x2="0" y2="1">
          <stop stopColor="#a9cbee" />
          <stop offset="1" stopColor="#7ba3d4" />
        </linearGradient>
        <linearGradient id="page" x2="1" y2="1">
          <stop stopColor="#fff" />
          <stop offset="1" stopColor="#8fc0f0" />
        </linearGradient>
        <linearGradient id="fold" x2="1" y2="0">
          <stop stopColor="#fff" />
          <stop offset="1" stopColor="#555" />
        </linearGradient>
        <linearGradient id="cube" x2="0" y2="1">
          <stop stopColor="#f2f2f2" />
          <stop offset="1" stopColor="#d6d6d6" />
        </linearGradient>
      </defs>
    </svg>
  )
}

type Stops = [number, string][]

function Ramp({ id, from, to, stops }: { id: string; from: [number, number]; to: [number, number]; stops: Stops }) {
  return (
    <linearGradient id={id} gradientUnits="userSpaceOnUse" x1={from[0]} y1={from[1]} x2={to[0]} y2={to[1]}>
      {stops.map(([offset, color]) => (
        <stop key={offset} offset={offset} stopColor={color} />
      ))}
    </linearGradient>
  )
}

const rim = 'M637 332C637 290 668 259 712 257L1001 240C1046 238 1077 268 1077 308V585C1077 625 1042 658 1001 660L712 676C668 678 637 650 637 610z'
const cavity = 'M655 333C655 300 678 275 712 273L1001 257C1034 256 1059 276 1059 302V593C1059 620 1030 643 996 643L712 659C675 661 655 640 655 608z'
const block = 'M693 345C693 330 704 320 719 319L1009 303C1026 302 1040 312 1040 328V605C1040 622 1027 634 1012 635L722 651C706 652 693 640 693 623z'

function Canvas() {
  return (
    <svg
      className="absolute inset-0 h-full w-full"
      viewBox="0 55 1920 935"
      preserveAspectRatio="xMinYMin slice"
      fill="none"
      role="img"
      aria-label="Mould model"
    >
      <defs>
        <clipPath id="cavity-clip"><path d={cavity} /></clipPath>
        <clipPath id="block-clip"><path d={block} /></clipPath>
        <Ramp id="front" from={[183, 60]} to={[445, 280]} stops={[[0, '#8c8d85'], [1, '#93948c']]} />
        <Ramp id="under" from={[200, 350]} to={[470, 290]} stops={[[0, '#8b8a82'], [1, '#918f86']]} />
        <Ramp id="side" from={[450, 60]} to={[480, 340]} stops={[[0, '#a09d96'], [1, '#a7a7a1']]} />
        <Ramp id="rim" from={[640, 300]} to={[1070, 640]} stops={[[0, '#989a93'], [1, '#a8aaa4']]} />
        <Ramp id="face" from={[717, 340]} to={[1005, 600]} stops={[[0, '#9a9c95'], [1, '#a5a7a1']]} />
        <Ramp id="right-wall" from={[1077, 320]} to={[1108, 620]} stops={[[0, '#b4b1aa'], [1, '#bfbeb9']]} />
        <Ramp id="bottom-wall" from={[712, 700]} to={[1010, 690]} stops={[[0, '#95958b'], [0.45, '#98958c'], [0.7, '#9a958d'], [1, '#95958b']]} />
        <Ramp id="corner-br" from={[1005, 705]} to={[1108, 625]} stops={[[0, '#95958b'], [0.3, '#9f9d94'], [0.55, '#8f8c84'], [0.75, '#b9b9b5'], [1, '#bdbcb7']]} />
        <Ramp id="corner-bl" from={[660, 685]} to={[735, 700]} stops={[[0, '#c9c8c2'], [0.25, '#cfcec8'], [0.5, '#a3a092'], [0.8, '#9c9a8c'], [1, '#95958b']]} />
        <Ramp id="top-wall" from={[860, 265]} to={[863, 312]} stops={[[0, '#75756e'], [0.35, '#4e4e49'], [0.75, '#1f1f1d'], [1, '#12110f']]} />
        <Ramp id="corner-tl" from={[672, 288]} to={[716, 345]} stops={[[0, '#85837b'], [0.4, '#66655f'], [0.8, '#2f2f2d'], [1, '#1c1c1a']]} />
        <Ramp id="corner-tr" from={[1053, 270]} to={[1015, 318]} stops={[[0, '#7c7972'], [0.4, '#45443f'], [1, '#22221f']]} />
        <Ramp id="left-wall" from={[654, 0]} to={[693, 0]} stops={[[0, '#858788'], [0.2, '#6d6e6e'], [0.45, '#3b3b3a'], [0.7, '#41413f'], [0.8, '#30302e'], [1, '#171716']]} />
        <Ramp id="right-inner" from={[1039, 0]} to={[1058, 0]} stops={[[0, '#5f5f5d'], [1, '#777774']]} />
        <Ramp id="floor" from={[860, 643]} to={[861, 653]} stops={[[0, '#3f3d39'], [1, '#6b6a64']]} />
        <Ramp id="fillet-top" from={[860, 311]} to={[861, 331]} stops={[[0, '#8c857a'], [0.35, '#968e81'], [0.75, '#67645b'], [1, '#8d8d86']]} />
        <Ramp id="fillet-bottom" from={[860, 606]} to={[862, 643]} stops={[[0, '#b4b6b2'], [0.2, '#8f908c'], [0.45, '#42403b'], [0.8, '#3b3934'], [1, '#4a4842']]} />
        <Ramp id="fillet-left" from={[693, 0]} to={[717, 0]} stops={[[0, '#6f6a5f'], [0.25, '#878275'], [0.5, '#6b6860'], [0.8, '#878882'], [1, '#999a94']]} />
        <Ramp id="fillet-right" from={[1006, 0]} to={[1039, 0]} stops={[[0, '#b4b6b1'], [0.12, '#d0d2ce'], [0.3, '#979893'], [0.5, '#67655e'], [0.72, '#7f796b'], [0.88, '#5c5952'], [1, '#4b4a46']]} />
      </defs>

      <path d="M183 55h263v216L183 286z" fill="url(#front)" />
      <path d="M446 55h16l22 46v249l-38-79z" fill="url(#side)" />
      <path d="M183 286l263-15 38 79-263 15z" fill="url(#under)" />

      <path d="M1074 290L1098 337Q1108 352 1108 372V650L1077 585z" fill="url(#right-wall)" />
      <path d="M1075 292L1098 337Q1107 352 1108 372L1077 308z" fill="#c6c0b4" />
      <path d="M1077 585L1108 650C1108 692 1075 723 1033 724L1001 660C1042 658 1077 625 1077 585z" fill="url(#corner-br)" />
      <path d="M652 650L673 698C690 726 712 741 743 740L712 676C685 678 665 668 652 650z" fill="url(#corner-bl)" />
      <path d="M712 676l289-16 32 64-290 16z" fill="url(#bottom-wall)" />
      <path d={rim} fill="url(#rim)" />

      <g clipPath="url(#cavity-clip)">
        <path d="M640 250h430v420H640z" fill="#2a2a27" />
        <path d="M650 330h43v335h-43z" fill="url(#left-wall)" />
        <path d="M1039 310h22v345h-22z" fill="url(#right-inner)" />
        <path d="M712 270l289-16 24 52-290 20z" fill="url(#top-wall)" />
        <path d="M650 333L650 260H706L735 319 700 330 692 362 684 389z" fill="url(#corner-tl)" />
        <path d="M1001 250h60v70l-20-3-16-11z" fill="url(#corner-tr)" />
        <path d="M1036 317l24 3v48z" fill="#3b3b38" />
        <path d="M698 635L1045 612v40L707 662z" fill="url(#floor)" />
        <path d="M1012 635q27-1 27-28l8 12-20 22z" fill="#777671" />
      </g>

      <g clipPath="url(#block-clip)">
        <path d={block} fill="url(#face)" />
        <path d="M690 300h27v355h-27z" fill="url(#fillet-left)" />
        <path d="M1006 290h36v355h-36z" fill="url(#fillet-right)" />
        <path d="M690 318l28-2 291-16 30 2v27q-12-7-33-7l-289 16q-17 0-24 9z" fill="url(#fillet-top)" />
        <path d="M690 623q8-8 27-8l289-18q22 0 33 8v40l-349 20z" fill="url(#fillet-bottom)" />
        <path d="M1039 605q-15-8-33-8l4 8q14 2 15 12t-13 18h27z" fill="#85857f" opacity=".6" />
      </g>

      <g stroke="#000" shapeRendering="crispEdges" transform="translate(-.6 .4)">
        <path d="M183 55v231l263-15V55M183 286l38 79 264-15V101L462 55M446 271l38 79" />
        <path d="M297 119l-5 4M336 120q10 7 30 6l37-2v6l-1 8M405 126v12l2 7q6 12 24 18v3l-80 4-5-15M403 126l2 12M431 163l-80 3-4-13-24-4-2 13M323 152l23 4M323 149l-4 15-3-6-4 1-3 5-2-14-22 6-3 16M307 152l-22 6M285 157l-5 15M312 160h6M311 163h6M200 175l80-5M202 179l80-6M202 179l-3-3 3-3M226 148v4" />
        <path d={rim} />
        <path d={cavity} />
        <path d="M1098 337Q1109 352 1109 372V650C1109 692 1075 723 1033 724L743 740C712 741 690 726 673 698" />
        <path d="M1077 308l31 64M1077 585l31 65M1001 660l32 64M712 676l31 64" />
        <path d="M655 333l29 56v264M684 389q1-14 9-26M712 273l23 46M1001 257l24 49M1037 317q12 0 21 4M1040 326l18 38M1039 330l19 38M655 610l18 37M1040 606l8 13" />
        <path d="M693 347V623C693 640 706 652 722 651L1012 635C1027 634 1040 622 1040 605V326" />
        <path d="M693 347q6-8 24-9l289-16q23 0 33 7M693 623q8-8 24-8l289-18q23 0 33 8" />
        <path d="M717 338V615l2 19 7 24M719 319l-2 19M1006 322V597l2 19 6 24M1009 303l-3 19" />
      </g>
    </svg>
  )
}
